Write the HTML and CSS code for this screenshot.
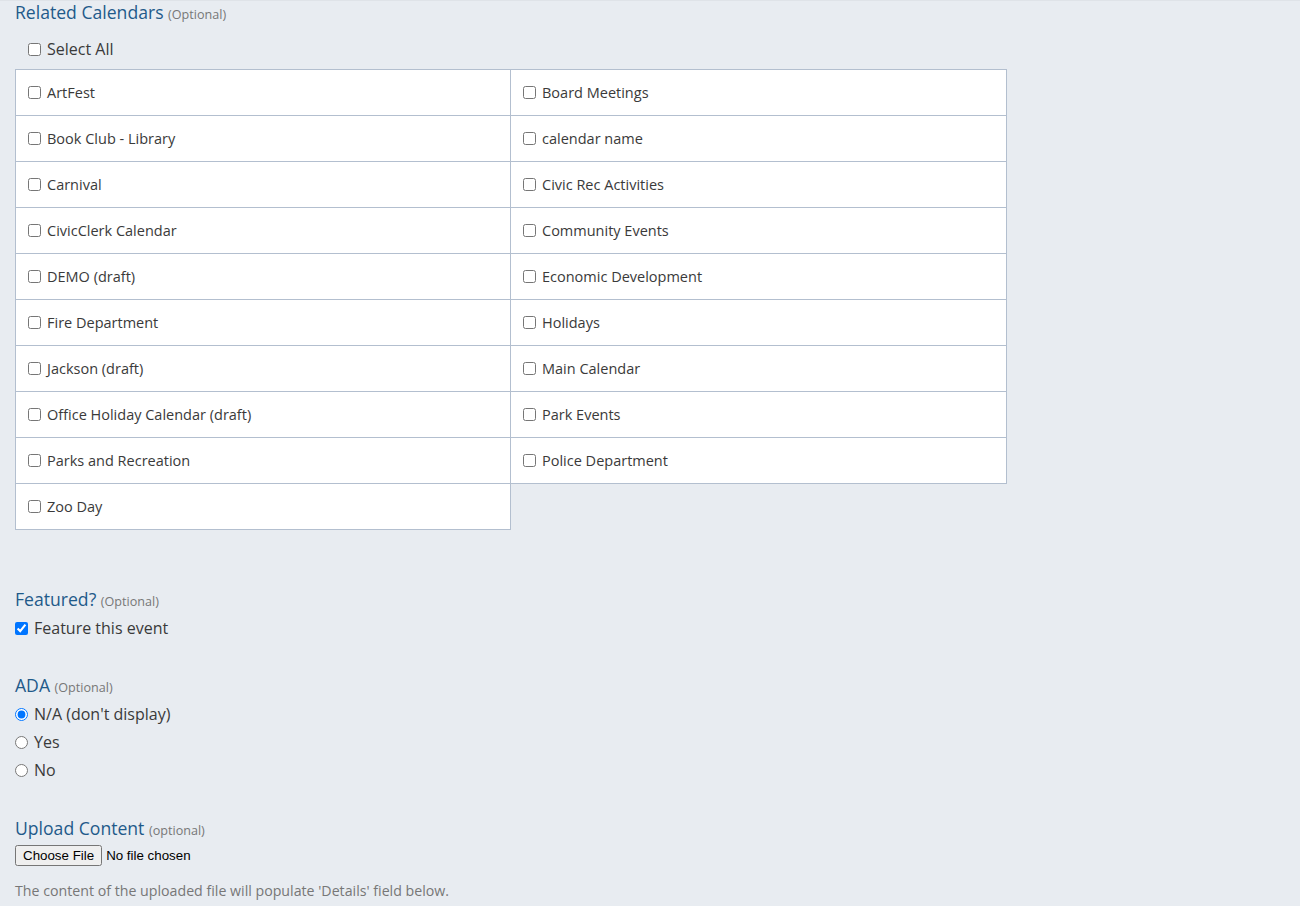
FILE: index.html
```html
<!DOCTYPE html>
<html>
<head>
<meta charset="utf-8">
<link rel="stylesheet" href="styles.css">
</head>
<body>
<div class="page">
  <section class="field">
    <h2 class="label">Related Calendars <span class="opt">(Optional)</span></h2>
    <label class="select-all"><input type="checkbox"><span>Select All</span></label>
    <div class="cal-grid">
      <label class="cell"><input type="checkbox"><span>ArtFest</span></label>
      <label class="cell"><input type="checkbox"><span>Board Meetings</span></label>
      <label class="cell"><input type="checkbox"><span>Book Club - Library</span></label>
      <label class="cell"><input type="checkbox"><span>calendar name</span></label>
      <label class="cell"><input type="checkbox"><span>Carnival</span></label>
      <label class="cell"><input type="checkbox"><span>Civic Rec Activities</span></label>
      <label class="cell"><input type="checkbox"><span>CivicClerk Calendar</span></label>
      <label class="cell"><input type="checkbox"><span>Community Events</span></label>
      <label class="cell"><input type="checkbox"><span>DEMO (draft)</span></label>
      <label class="cell"><input type="checkbox"><span>Economic Development</span></label>
      <label class="cell"><input type="checkbox"><span>Fire Department</span></label>
      <label class="cell"><input type="checkbox"><span>Holidays</span></label>
      <label class="cell"><input type="checkbox"><span>Jackson (draft)</span></label>
      <label class="cell"><input type="checkbox"><span>Main Calendar</span></label>
      <label class="cell"><input type="checkbox"><span>Office Holiday Calendar (draft)</span></label>
      <label class="cell"><input type="checkbox"><span>Park Events</span></label>
      <label class="cell"><input type="checkbox"><span>Parks and Recreation</span></label>
      <label class="cell"><input type="checkbox"><span>Police Department</span></label>
      <label class="cell"><input type="checkbox"><span>Zoo Day</span></label>
    </div>
  </section>

  <section class="field featured">
    <h2 class="label">Featured? <span class="opt">(Optional)</span></h2>
    <label class="opt-row"><input type="checkbox" checked><span>Feature this event</span></label>
  </section>

  <section class="field ada">
    <h2 class="label">ADA <span class="opt">(Optional)</span></h2>
    <label class="opt-row"><input type="radio" name="ada" checked><span>N/A (don't display)</span></label>
    <label class="opt-row"><input type="radio" name="ada"><span>Yes</span></label>
    <label class="opt-row"><input type="radio" name="ada"><span>No</span></label>
  </section>

  <section class="field upload">
    <h2 class="label">Upload Content <span class="opt">(optional)</span></h2>
    <input type="file" class="file">
    <p class="help">The content of the uploaded file will populate 'Details' field below.</p>
  </section>
</div>
</body>
</html>
```

FILE: styles.css
```css
html, body {
  margin: 0;
  padding: 0;
  background: #e8ecf1;
}
body {
  font-family: "Open Sans", "Liberation Sans", sans-serif;
  color: #3a3a3a;
  border-top: 1px solid #dfe3e8;
}
.page {
  padding: 0 15px;
}
.label {
  margin: 0;
  font-size: 17.6px;
  font-weight: 400;
  color: #1f5a8a;
  line-height: 22px;
}
.opt {
  font-size: 12.6px;
  color: #777;
}
.select-all {
  display: flex;
  align-items: center;
  height: 22px;
  margin-top: 12px;
  margin-bottom: 9px;
  padding-left: 13px;
  font-size: 16px;
}
input[type="checkbox"], input[type="radio"] {
  margin: 0 6px 0 0;
  width: 13px;
  height: 13px;
}
.cal-grid {
  display: grid;
  grid-template-columns: 495px 496px;
  width: 991px;
  border-top: 1px solid #b3bfcf;
  border-left: 1px solid #b3bfcf;
}
.cell {
  display: flex;
  align-items: center;
  height: 45px;
  padding-left: 12px;
  background: #fff;
  border-right: 1px solid #b3bfcf;
  border-bottom: 1px solid #b3bfcf;
  font-size: 14.5px;
  color: #3a3a3a;
}
.featured {
  margin-top: 58px;
}
.opt-row {
  display: flex;
  align-items: center;
  height: 28px;
  font-size: 16px;
}
.featured .label, .ada .label, .upload .label {
  margin-bottom: 1px;
}
.ada {
  margin-top: 32px;
}
.upload {
  margin-top: 33px;
}
.file {
  font-family: "Liberation Sans", Arial, sans-serif;
  font-size: 13.333px;
  margin-top: 1px;
  color: #000;
}
.help {
  margin: 15px 0 0;
  font-size: 14.2px;
  color: #777;
}
```
